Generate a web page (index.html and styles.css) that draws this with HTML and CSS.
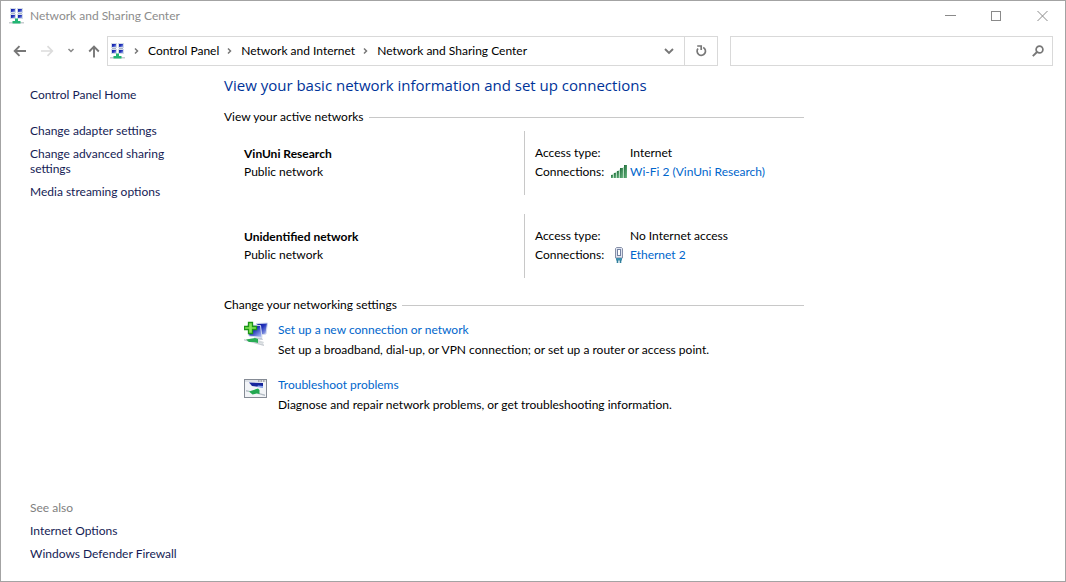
FILE: index.html
```html
<!DOCTYPE html>
<html lang="en">
<head>
<meta charset="utf-8">
<title>Network and Sharing Center</title>
<link rel="stylesheet" href="styles.css">
</head>
<body>
<svg width="0" height="0" class="defs" aria-hidden="true">
  <defs>
    <linearGradient id="screen" x1="0" y1="0" x2="1" y2="1"><stop offset="0" stop-color="#0a1392"/><stop offset=".45" stop-color="#2233bb"/><stop offset="1" stop-color="#c3d4fa"/></linearGradient>
    <linearGradient id="bars" x1="0" y1="0" x2="1" y2="1"><stop offset="0" stop-color="#1f6b3a"/><stop offset="1" stop-color="#6fbb86"/></linearGradient>
    <symbol id="network" viewBox="0 0 16 16">
      <g stroke="#d3dbe8" stroke-width="1" fill="url(#screen)">
        <rect x="1.5" y=".5" width="5" height="4"/><rect x="8.5" y=".5" width="5" height="4"/>
        <rect x="1.5" y="6.5" width="5" height="4"/><rect x="8.5" y="6.5" width="5" height="4"/>
      </g>
      <path d="M2 5.500h4M9 5.500h4" stroke="#a9b4c8"/>
      <path d="M0 14h15v1.500H0z" fill="#c9cdd0"/>
      <path d="M6 10.500h3V13h2.500v2.500h-8V13H6z" fill="#22b573"/>
    </symbol>
  </defs>
</svg>
<div class="window">
  <header class="titlebar">
    <svg class="app-icon" width="16" height="16" aria-hidden="true"><use href="#network"/></svg>
    <span class="title">Network and Sharing Center</span>
    <div class="controls">
      <button aria-label="Minimize"><svg width="11" height="11"><path d="M0 4.500h11" stroke="#8a8a8a"/></svg></button>
      <button aria-label="Maximize"><svg width="11" height="11"><rect x=".5" y=".5" width="9" height="9" fill="none" stroke="#8a8a8a"/></svg></button>
      <button aria-label="Close"><svg width="11" height="11"><path d="M.5 0l10 10M10.500 0l-10 10" stroke="#8a8a8a"/></svg></button>
    </div>
  </header>
  <div class="toolbar">
    <div class="history">
      <button class="nav" aria-label="Back"><svg width="14" height="12"><path d="M13 6H2M6.500 1.200L1.700 6l4.800 4.800" fill="none" stroke="#777" stroke-width="1.900"/></svg></button>
      <button class="nav forward" aria-label="Forward" disabled><svg width="14" height="12"><path d="M1 6h11M7.500 1.200L12.300 6l-4.800 4.800" fill="none" stroke="#dcdcdc" stroke-width="1.700"/></svg></button>
      <button class="nav recent" aria-label="Recent locations"><svg width="8" height="6"><path d="M1.500 1l2.500 2.500L6.500 1" fill="none" stroke="#888" stroke-width="1.500"/></svg></button>
      <button class="nav" aria-label="Up"><svg width="12" height="13"><path d="M6 12.500V2M1.200 6.500L6 1.700l4.800 4.800" fill="none" stroke="#777" stroke-width="1.900"/></svg></button>
    </div>
    <div class="address">
      <nav class="crumbs" aria-label="Address">
        <svg width="16" height="16" aria-hidden="true"><use href="#network"/></svg>
        <svg class="chev" width="5" height="8" aria-hidden="true"><path d="M1 1.500l2.500 2.500L1 6.500" fill="none" stroke="#777" stroke-width="1.500"/></svg>
        <a href="#">Control Panel</a>
        <svg class="chev" width="5" height="8" aria-hidden="true"><path d="M1 1.500l2.500 2.500L1 6.500" fill="none" stroke="#777" stroke-width="1.500"/></svg>
        <a href="#">Network and Internet</a>
        <svg class="chev" width="5" height="8" aria-hidden="true"><path d="M1 1.500l2.500 2.500L1 6.500" fill="none" stroke="#777" stroke-width="1.500"/></svg>
        <a href="#">Network and Sharing Center</a>
      </nav>
      <button class="drop" aria-label="Previous locations"><svg width="10" height="7"><path d="M1 1l4 4 4-4" fill="none" stroke="#777" stroke-width="1.900"/></svg></button>
      <button class="refresh" aria-label="Refresh"><svg width="12" height="12"><path d="M8.200 2.400A4.200 4.200 0 1 1 3 3.500M2.200 1h4v4" fill="none" stroke="#777" stroke-width="1.700"/></svg></button>
    </div>
    <form class="search">
      <input type="text" aria-label="Search Control Panel">
      <button type="button" aria-label="Search"><svg width="12" height="12"><circle cx="7.500" cy="4.500" r="3.400" fill="none" stroke="#777" stroke-width="1.700"/><path d="M5 7L.8 11.200" stroke="#777" stroke-width="1.900"/></svg></button>
    </form>
  </div>
  <div class="body">
    <aside class="sidebar">
      <a class="home" href="#">Control Panel Home</a>
      <a href="#">Change adapter settings</a>
      <a href="#">Change advanced sharing settings</a>
      <a href="#">Media streaming options</a>
      <h2 class="see-also">See also</h2>
      <a href="#">Internet Options</a>
      <a href="#">Windows Defender Firewall</a>
    </aside>
    <main class="main">
      <h1>View your basic network information and set up connections</h1>
      <h2 class="section">View your active networks</h2>
      <section class="network">
        <div class="identity"><h3>VinUni Research</h3><p>Public network</p></div>
        <dl class="details">
          <dt>Access type:</dt><dd>Internet</dd>
          <dt>Connections:</dt>
          <dd class="conn"><svg width="16" height="13" aria-hidden="true"><path d="M0 10L16 0v13H0z" fill="#b5dcc0"/><g fill="url(#bars)"><rect x="0" y="10" width="2" height="3"/><rect x="3" y="8" width="2" height="5"/><rect x="6" y="6" width="2" height="7"/><rect x="9" y="3" width="3" height="10"/><rect x="13" y="0" width="3" height="13"/></g></svg><a href="#">Wi-Fi 2 (VinUni Research)</a></dd>
        </dl>
      </section>
      <section class="network">
        <div class="identity"><h3>Unidentified network</h3><p>Public network</p></div>
        <dl class="details">
          <dt>Access type:</dt><dd>No Internet access</dd>
          <dt>Connections:</dt>
          <dd class="conn"><svg width="16" height="16" aria-hidden="true"><path d="M5.500.500h5l1 1v9.500h-7V1.500z" fill="#dfe4f0" stroke="#8790a8"/><rect x="6.500" y="2.500" width="3" height="6" fill="#fff" stroke="#7482a2"/><path d="M5 11h6v2.500H5z" fill="#3e8fae"/><path d="M6.500 13v3M9.500 13v3" stroke="#317f9c" stroke-width="1.600"/></svg><a href="#">Ethernet 2</a></dd>
        </dl>
      </section>
      <h2 class="section">Change your networking settings</h2>
      <section class="task">
        <svg width="24" height="26" aria-hidden="true">
          <path d="M12.500 3.500l11-.5-1.500 11-6 1z" fill="url(#screen)" stroke="#d3dbee"/>
          <path d="M3.500 5l13 .5 1.500 12-13-1.500z" fill="url(#screen)" stroke="#d3dbee"/>
          <path d="M10 17.500l8 .5 1 2-9-1z" fill="#c1c8d6"/>
          <path d="M0 19l20 5.500v1.500L0 20.500z" fill="#c9ced3"/>
          <path d="M2 19.500l9-1.500 3 1v4l-4-1-5 0z" fill="#29ac55"/>
          <path d="M14 20l6 2-1 2-5-1z" fill="#d5dadd"/>
          <path d="M4.500 2.500h4v4h4v3h-4v4h-4v-4h-4v-3h4z" fill="#86e65a" stroke="#1d9518" stroke-width="1.300"/>
        </svg>
        <div><a href="#">Set up a new connection or network</a><p>Set up a broadband, dial-up, or VPN connection; or set up a router or access point.</p></div>
      </section>
      <section class="task">
        <svg width="24" height="26" aria-hidden="true">
          <rect x=".5" y="4.500" width="22" height="18" fill="#f2f4f7" stroke="#858b95"/>
          <path d="M1 5h21v2H1z" fill="#dde1e7"/><path d="M14 6h1.500M16.500 6H18M19 6h1.500" stroke="#777"/>
          <path d="M5 7.500l14 .5v4.500L8 11z" fill="#16259c"/><path d="M14 10.500l5 .5v2l-6-1z" fill="#8ba7ec"/>
          <path d="M2 15l4 1-1 1-3-.5zM15 18l6 1.500V21l-7-2z" fill="#b4bcc5"/>
          <path d="M5 16.500l9-3 1.500 1.500v4l-3-.5-4 1z" fill="#22a750"/>
        </svg>
        <div><a href="#">Troubleshoot problems</a><p>Diagnose and repair network problems, or get troubleshooting information.</p></div>
      </section>
    </main>
  </div>
</div>
</body>
</html>
```
FILE: styles.css
```css
* { box-sizing: border-box; }
body {
  margin: 0;
  font: 12px/15px Lato, "Open Sans", sans-serif;
  color: #000;
  background: #fff;
}
h1, h2, h3, p, dl, dd { margin: 0; font-size: inherit; font-weight: normal; }
a { text-decoration: none; color: inherit; }
svg { display: block; flex: none; }
button { border: 0; padding: 0; background: none; display: flex; align-items: center; justify-content: center; }
.defs { position: absolute; }
.window {
  min-height: 100vh;
  display: flex;
  flex-direction: column;
  border: 1px solid #a3a3a3;
}
.titlebar { display: flex; height: 30px; align-items: center; padding-left: 8px; }
.title { flex: 1; margin-left: 5px; padding-bottom: 1px; color: #8c8c8c; }
.controls { display: flex; align-self: stretch; }
.controls button { width: 46px; }
.toolbar { display: flex; align-items: center; height: 40px; padding: 0 12px; }
.history { display: flex; flex: none; width: 94px; justify-content: space-between; padding-right: 7px; align-items: center; }
.address { display: flex; flex: 612; height: 30px; border: 1px solid #d9d9d9; }
.crumbs { display: flex; flex: 1; align-items: center; padding-left: 2px; }
.crumbs a { white-space: nowrap; padding-bottom: 1px; }
.chev { margin: 0 9px 0 8px; }
.drop { width: 30px; }
.refresh { width: 33px; border-left: 1px solid #d9d9d9; }
.search { display: flex; flex: 323; height: 30px; margin-left: 12px; border: 1px solid #d9d9d9; }
.search input { flex: 1; min-width: 0; border: 0; outline: 0; font: inherit; }
.search button { width: 28px; }
.body { display: flex; flex: 1; }
.sidebar {
  width: 223px;
  flex: none;
  display: flex;
  flex-direction: column;
  align-items: flex-start;
  gap: 8px;
  padding: 16px 44px 20px 29px;
  color: #151c55;
}
.home { margin-bottom: 13px; }
.see-also { margin-top: auto; color: #808080; }
.main { width: 580px; padding-top: 3px; }
.main a { color: #0066cc; }
h1 { font: 15px/22px "Open Sans", "Noto Sans", sans-serif; color: #003399; margin-bottom: 13px; white-space: nowrap; }
.section { display: flex; align-items: flex-start; gap: 5px; }
.section::after { content: ""; flex: 1; margin-top: 8px; border-top: 1px solid #c8c8c8; }
.network { display: flex; margin: 7px 0 19px 20px; height: 64px; }
.network + .network { margin-top: 0; }
.identity { width: 280px; padding-top: 15px; }
.identity h3 { font-weight: bold; margin-bottom: 3px; }
.details {
  display: grid;
  grid-template-columns: 76px 1fr;
  grid-auto-rows: 15px;
  gap: 4px 0;
  flex: 1;
  padding: 14px 0 0 10px;
  border-left: 1px solid #c8c8c8;
}
.details dd { padding-left: 19px; white-space: nowrap; }
.details .conn { display: flex; align-items: center; gap: 3px; padding-left: 0; }
.task { display: flex; gap: 10px; margin: 8px 0 18px 20px; }
.task + .task { margin-top: 0; }
.task div { padding-top: 2px; }
.task p { margin-top: 5px; white-space: nowrap; }
.task a { display: block; }
```
